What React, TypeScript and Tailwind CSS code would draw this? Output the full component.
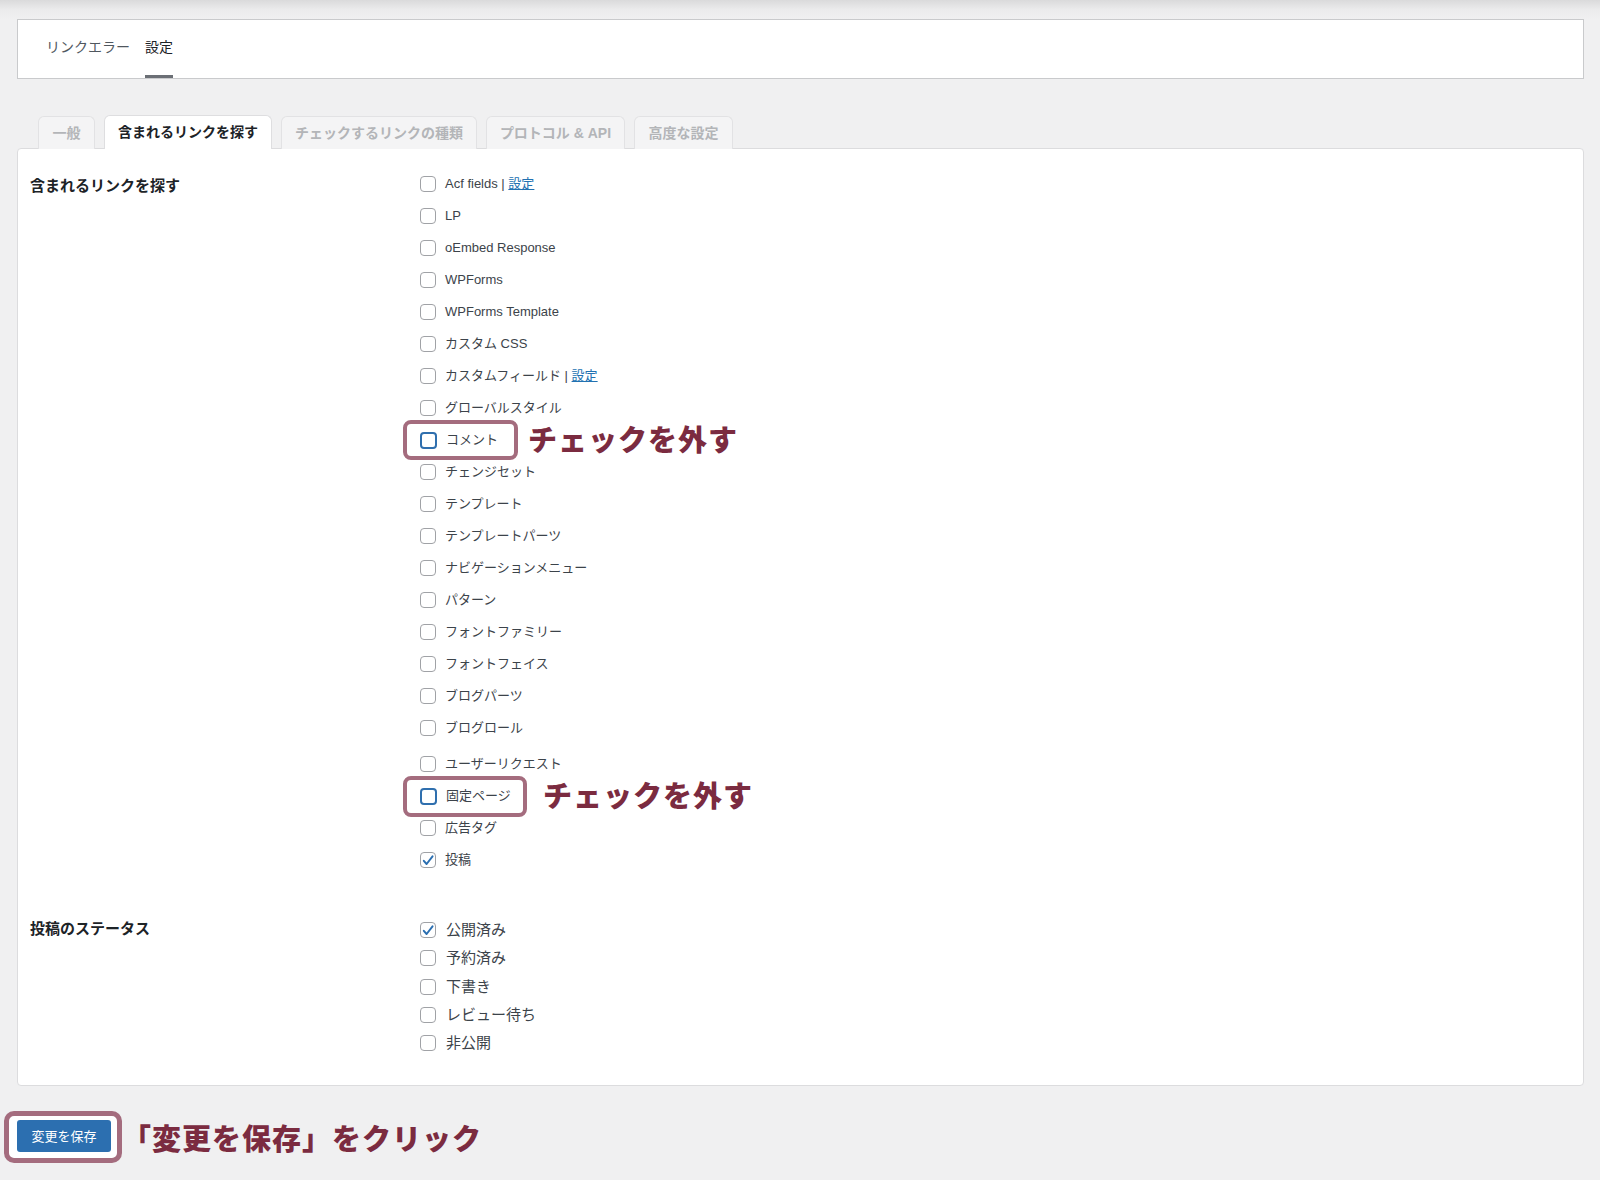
import React from "react";

type Item = { label: string; link?: boolean; checked?: boolean; annot?: boolean; gapTop?: boolean };

const items: Item[] = [
  { label: "Acf fields", link: true },
  { label: "LP" },
  { label: "oEmbed Response" },
  { label: "WPForms" },
  { label: "WPForms Template" },
  { label: "カスタム CSS" },
  { label: "カスタムフィールド", link: true },
  { label: "グローバルスタイル" },
  { label: "コメント", annot: true },
  { label: "チェンジセット" },
  { label: "テンプレート" },
  { label: "テンプレートパーツ" },
  { label: "ナビゲーションメニュー" },
  { label: "パターン" },
  { label: "フォントファミリー" },
  { label: "フォントフェイス" },
  { label: "ブログパーツ" },
  { label: "ブログロール" },
  { label: "ユーザーリクエスト", gapTop: true },
  { label: "固定ページ", annot: true },
  { label: "広告タグ" },
  { label: "投稿", checked: true },
];

const statuses: Item[] = [
  { label: "公開済み", checked: true },
  { label: "予約済み" },
  { label: "下書き" },
  { label: "レビュー待ち" },
  { label: "非公開" },
];

function Checkbox({ checked, focus }: { checked?: boolean; focus?: boolean }) {
  return (
    <span
      className={
        focus
          ? "relative z-10 w-[17px] h-[17px] rounded-[4px] border-2 border-[#2f6fae] bg-white flex items-center justify-center shrink-0"
          : "relative z-10 w-[16px] h-[16px] rounded-[4px] border border-[#a0a2a6] bg-white flex items-center justify-center shrink-0"
      }
    >
      {checked && (
        <svg width="15" height="15" viewBox="0 0 20 20" className="block">
          <path d="M4 10.5 L8 15 L16.5 4" fill="none" stroke="#2b6fb1" strokeWidth="2.8" strokeLinecap="round" strokeLinejoin="round" />
        </svg>
      )}
    </span>
  );
}

function Annot({ text }: { text: string }) {
  return (
    <span className="font-['Noto_Sans_CJK_JP',sans-serif] font-black text-[29px] leading-none text-[#7b2b40] tracking-[1px] whitespace-nowrap">
      {text}
    </span>
  );
}

export default function App() {
  return (
    <div className="min-h-[1180px] w-[1600px] bg-[#f0f0f1] font-['Liberation_Sans','Noto_Sans_CJK_JP',sans-serif] text-[#3c434a]">
      <div className="h-[19px] bg-linear-to-b from-[#dadadb] via-[#ebebec] to-[#f0f0f1]" />
      <div className="ml-[17px] mr-[16px]">
        {/* Header */}
        <div className="h-[60px] bg-white border border-[#c9cacc] flex gap-[15px] pl-[28px]">
          <div className="flex flex-col h-full">
            <span className="pt-[17px] text-[14px] leading-[20px] text-[#50575e]">リンクエラー</span>
          </div>
          <div className="flex flex-col h-full">
            <span className="pt-[17px] text-[14px] leading-[20px] text-[#1d2327]">設定</span>
            <span className="mt-auto h-[3px] bg-[#6b6f75]" />
          </div>
        </div>

        {/* Tabs */}
        <div className="mt-[36px] ml-[21px] flex gap-[9px] items-end relative z-10 -mb-px">
          <div className="h-[33px] w-[57px] rounded-t-[6px] border border-b-0 border-[#e2e2e4] bg-[#f4f4f5] flex items-center justify-center text-[14px] font-bold text-[#b3b5b8]">一般</div>
          <div className="h-[34px] w-[168px] rounded-t-[6px] border border-b-0 border-[#dedee0] bg-white flex items-center justify-center text-[14px] font-bold text-[#1d2327] pb-px">含まれるリンクを探す</div>
          <div className="h-[33px] w-[196px] rounded-t-[6px] border border-b-0 border-[#e2e2e4] bg-[#f4f4f5] flex items-center justify-center text-[14px] font-bold text-[#b3b5b8]">チェックするリンクの種類</div>
          <div className="h-[33px] w-[139px] rounded-t-[6px] border border-b-0 border-[#e2e2e4] bg-[#f4f4f5] flex items-center justify-center text-[14px] font-bold text-[#b3b5b8]">プロトコル &amp; API</div>
          <div className="h-[33px] w-[99px] rounded-t-[6px] border border-b-0 border-[#e2e2e4] bg-[#f4f4f5] flex items-center justify-center text-[14px] font-bold text-[#b3b5b8]">高度な設定</div>
        </div>

        {/* Card */}
        <div className="bg-white border border-[#dcdcde] rounded-[4px] pb-[28px]">
          <div className="flex pt-[19px]">
            <div className="w-[402px] pl-[12px] shrink-0">
              <div className="mt-[7px] text-[15px] leading-[22px] font-bold text-[#1d2327]">含まれるリンクを探す</div>
            </div>
            <div className="flex flex-col">
              {items.map((it) => (
                <div key={it.label} className={"relative h-[32px] flex items-center gap-[9px]" + (it.gapTop ? " mt-[4px]" : "")}>
                  {it.annot && (
                    <>
                      <span
                        className={
                          it.label === "コメント"
                            ? "absolute left-[-17px] top-[-4px] w-[115px] h-[40px] border-[4px] border-[#a46c7e] rounded-[8px]"
                            : "absolute left-[-17px] top-[-4px] w-[124px] h-[41px] border-[4px] border-[#a46c7e] rounded-[8px]"
                        }
                      />
                      <span
                        className={
                          it.label === "コメント"
                            ? "absolute left-[108px] top-[0px]"
                            : "absolute left-[123px] top-[0px]"
                        }
                      >
                        <Annot text="チェックを外す" />
                      </span>
                    </>
                  )}
                  <Checkbox checked={it.checked} focus={it.annot} />
                  <span className="relative z-10 text-[13px] leading-[16px] text-[#3c434a] whitespace-nowrap">
                    {it.label}
                    {it.link && (
                      <>
                        {" | "}
                        <span className="text-[#2271b1] underline">設定</span>
                      </>
                    )}
                  </span>
                </div>
              ))}
            </div>
          </div>

          <div className="flex mt-[40px]">
            <div className="w-[402px] pl-[12px] shrink-0">
              <div className="mt-[2px] text-[15px] leading-[22px] font-bold text-[#1d2327]">投稿のステータス</div>
            </div>
            <div className="flex flex-col">
              {statuses.map((it) => (
                <div key={it.label} className="h-[28.3px] flex items-center gap-[10px]">
                  <Checkbox checked={it.checked} />
                  <span className="text-[15px] leading-[18px] text-[#3c434a] whitespace-nowrap">{it.label}</span>
                </div>
              ))}
            </div>
          </div>
        </div>

        {/* Save */}
        <div className="mt-[25px] -ml-[13px] flex items-center gap-0">
          <div className="w-[118px] h-[52px] border-[5px] border-[#a46c7e] rounded-[10px] bg-white pl-[8px] pt-[4px]">
            <button className="w-[94px] h-[32px] rounded-[3px] bg-[#2c6fb0] text-white text-[13px] leading-none">変更を保存</button>
          </div>
          <Annot text="「変更を保存」をクリック" />
        </div>
      </div>
    </div>
  );
}
